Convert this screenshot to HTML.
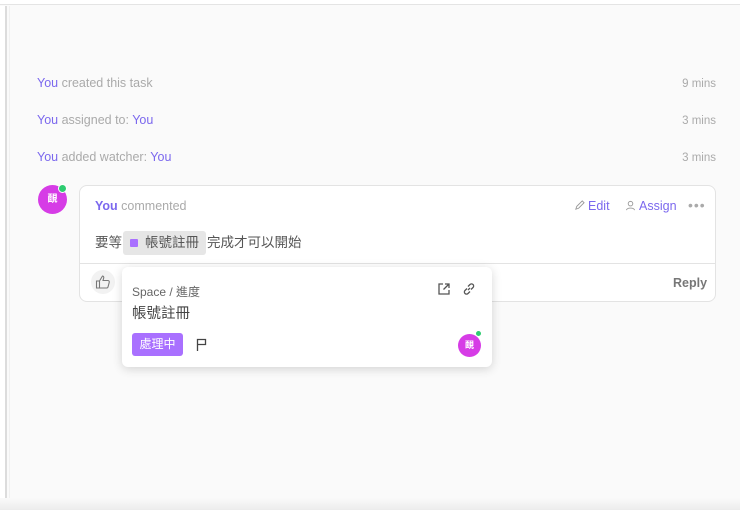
<!DOCTYPE html>
<html><head><meta charset="utf-8"><style>
*{margin:0;padding:0;box-sizing:border-box}
body{width:740px;height:510px;overflow:hidden;background:#fafafa;position:relative;font-family:"Liberation Sans","Noto Sans CJK TC",sans-serif;color:#555}
.abs{position:absolute}
.top{left:0;top:0;width:740px;height:5px;background:#fff;border-bottom:1px solid #e4e4e4}
.vl{left:0;top:6px;width:7px;height:504px;background:#fff;border-right:2px solid #dcdcdc}
.vl2{left:9px;top:6px;width:1px;height:504px;background:#f0f0f0}
.act{left:37px;font-size:12.5px;color:#aaa}
.p{color:#7b68ee}
.t{right:24px;font-size:11.5px;color:#aaa}
.av{border-radius:50%;background:#d63ce6;color:#fff;font-size:10px;text-align:center;font-weight:bold}
.dot{border-radius:50%;background:#2ecc71;border:1.5px solid #fff}
.card{left:79px;top:185px;width:637px;height:117px;background:#fff;border:1px solid #e3e3e3;border-radius:8px}
.pop{left:122px;top:267px;width:370px;height:100px;background:#fff;border-radius:6px;box-shadow:0 2px 10px rgba(0,0,0,.16)}
</style></head><body>
<div class="abs top"></div>
<div class="abs vl"></div><div class="abs vl2"></div>
<div class="abs" style="left:0;bottom:0;width:740px;height:12px;background:linear-gradient(#fafafa,#ececec)"></div>
<div class="abs act" style="top:76px"><span class="p">You</span> created this task</div>
<div class="abs t" style="top:78px">9 mins</div>
<div class="abs act" style="top:113px"><span class="p">You</span> assigned to: <span class="p">You</span></div>
<div class="abs t" style="top:115px">3 mins</div>
<div class="abs act" style="top:150px"><span class="p">You</span> added watcher: <span class="p">You</span></div>
<div class="abs t" style="top:152px">3 mins</div>
<div class="abs av" style="left:38px;top:185px;width:29px;height:29px;line-height:29px">靦</div>
<div class="abs dot" style="left:58px;top:184px;width:9px;height:9px"></div>
<div class="abs card">
 <div class="abs" style="left:15px;top:13px;font-size:12.5px;color:#aaa"><span class="p" style="font-weight:bold">You</span> commented</div>
 <div class="abs" style="left:494px;top:13px;font-size:12.5px;color:#7b68ee"><svg width="11" height="11" viewBox="0 0 12 12" style="vertical-align:-1px;margin-right:3px"><path d="M2 10l1-3 6-6 2 2-6 6z" fill="none" stroke="#999" stroke-width="1"/></svg>Edit</div>
 <div class="abs" style="left:545px;top:13px;font-size:12.5px;color:#7b68ee"><svg width="11" height="11" viewBox="0 0 12 12" style="vertical-align:-1px;margin-right:3px"><circle cx="6" cy="4" r="2.5" fill="none" stroke="#999"/><path d="M1.5 11c1-3 8-3 9 0" fill="none" stroke="#999"/></svg>Assign</div>
 <div class="abs" style="left:608px;top:11px;font-size:14px;color:#aaa;letter-spacing:1px">•••</div>
 <div class="abs" style="left:15px;top:45px;font-size:13.5px;color:#555;line-height:24px">要等<span style="display:inline-block;background:#e6e6e6;border-radius:3px;padding:0 7px;margin:0 1px"><span style="display:inline-block;width:8px;height:8px;background:#a970ff;border-radius:1px;margin-right:7px"></span>帳號註冊</span>完成才可以開始</div>
 <div class="abs" style="left:0;top:77px;width:635px;border-top:1px solid #e3e3e3"></div>
 <div class="abs" style="left:11px;top:84px;width:24px;height:24px;border-radius:50%;background:#f2f2f2"><svg width="16" height="16" viewBox="0 0 16 16" style="margin:4px"><path d="M1.5 7h3v7h-3zM4.5 7l3-5c1 0 1.5 1 1.2 2L8 6.5h5c1 0 1.5 1 1.2 2l-1.2 4.5c-.2.7-.8 1-1.5 1H4.5" fill="none" stroke="#777" stroke-width="1.1"/></svg></div>
 <div class="abs" style="left:593px;top:90px;font-size:12.5px;color:#777;font-weight:bold">Reply</div>
</div>
<div class="abs pop">
 <div class="abs" style="left:10px;top:16px;font-size:12px;color:#666">Space / 進度</div>
 <div class="abs" style="left:10px;top:35px;font-size:14.5px;color:#444">帳號註冊</div>
 <svg class="abs" style="left:315px;top:15px" width="14" height="14" viewBox="0 0 14 14"><path d="M6 2H2v10h10V8M8 2h4v4M12 2L6.5 7.5" fill="none" stroke="#555" stroke-width="1.3"/></svg>
 <svg class="abs" style="left:340px;top:15px" width="14" height="14" viewBox="0 0 14 14"><path d="M6 8l2-2M5 6.5L3 8.5a2 2 0 003 3L8 9.5M9 7.5l2-2a2 2 0 00-3-3L6 4.5" fill="none" stroke="#555" stroke-width="1.3"/></svg>
 <div class="abs" style="left:10px;top:66px;width:51px;height:23px;background:#a970ff;border-radius:3px;color:#fff;font-size:12px;line-height:23px;text-align:center">處理中</div>
 <svg class="abs" style="left:74px;top:71px" width="12" height="13" viewBox="0 0 12 13"><path d="M1.5 13V1.5h8v5h-8" fill="none" stroke="#444" stroke-width="1.3"/></svg>
 <div class="abs av" style="left:336px;top:67px;width:23px;height:23px;line-height:23px;font-size:9px">靦</div>
 <div class="abs dot" style="left:353px;top:63px;width:7px;height:7px"></div>
</div>
</body></html>
